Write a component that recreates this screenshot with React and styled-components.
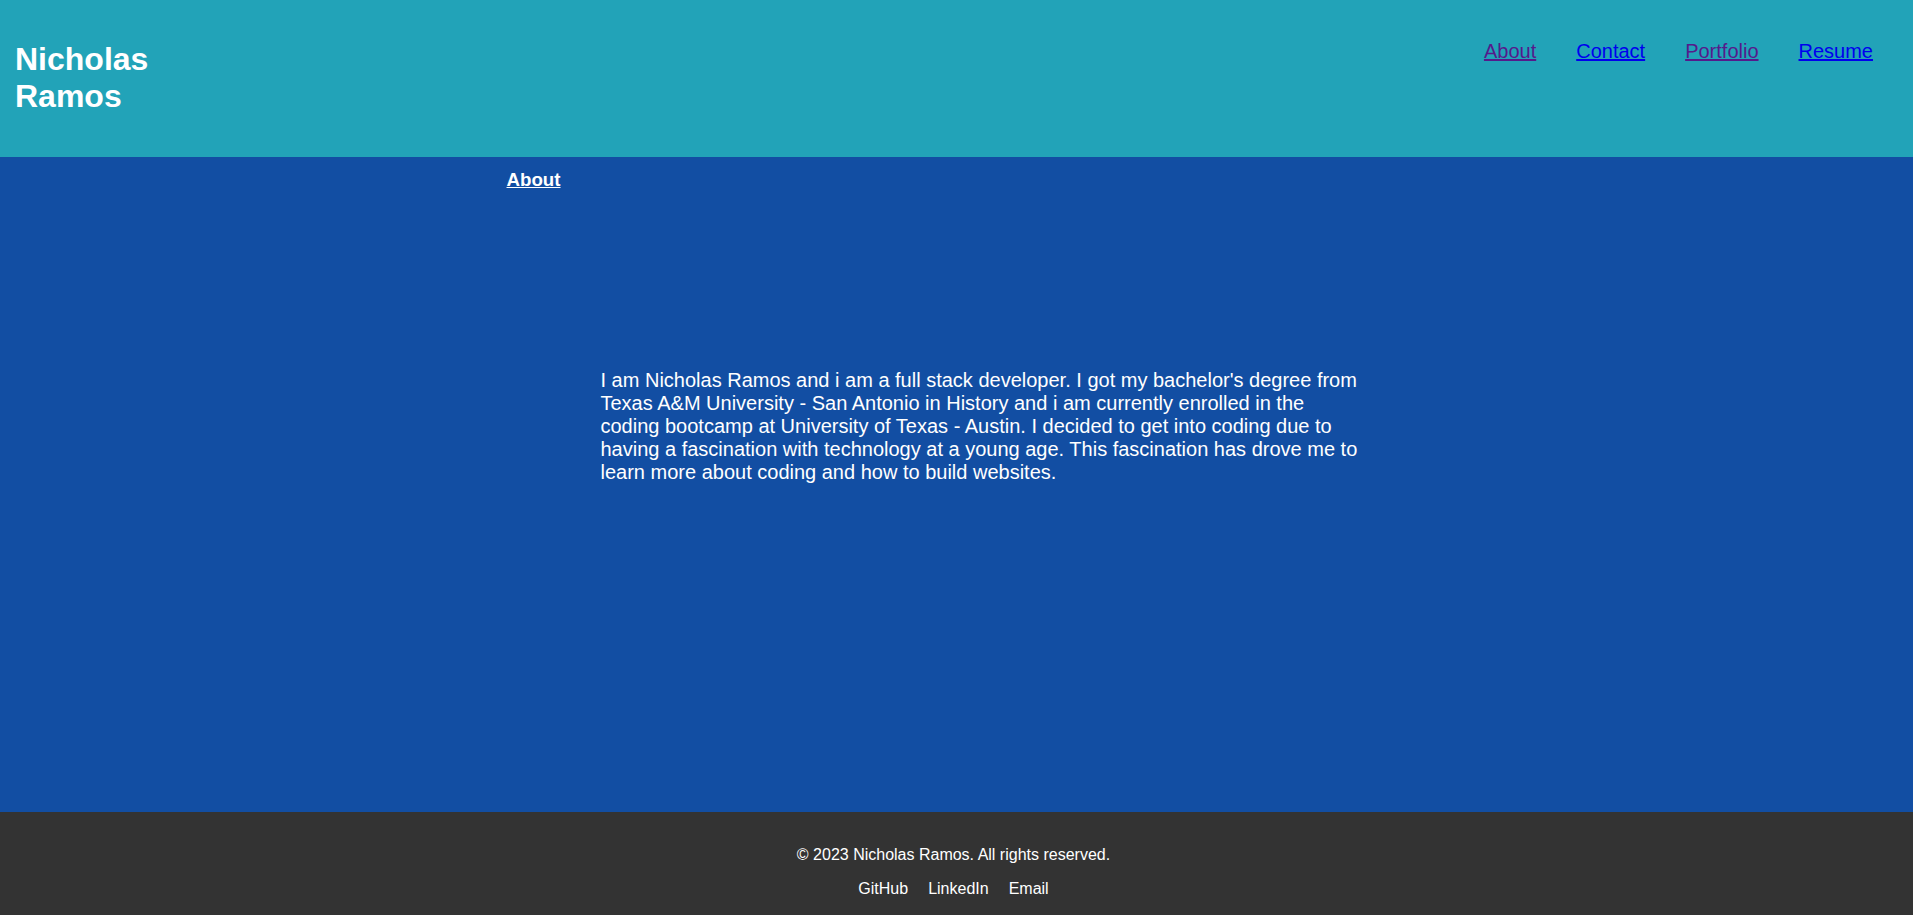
import React from "react";
import styled, { createGlobalStyle } from "styled-components";

const GlobalStyle = createGlobalStyle`
  body {
    margin: 0;
    font-family: "Liberation Sans", Arial, sans-serif;
  }
`;

const navLinks = [
  { label: "About", visited: true },
  { label: "Contact", visited: false },
  { label: "Portfolio", visited: true },
  { label: "Resume", visited: false },
];

const footerLinks = ["GitHub", "LinkedIn", "Email"];

const App = () => {
  return (
    <>
      <GlobalStyle />
      <Page>
        <Header>
          <Title>Nicholas Ramos</Title>
          <Nav>
            {navLinks.map((link) => (
              <NavLink key={link.label} href="#" visited={link.visited ? 1 : 0}>
                {link.label}
              </NavLink>
            ))}
          </Nav>
        </Header>
        <Main>
          <Content>
            <SectionTitle>
              <SectionLink href="#">About</SectionLink>
            </SectionTitle>
            <Bio>
              I am Nicholas Ramos and i am a full stack developer. I got my
              bachelor's degree from Texas A&amp;M University - San Antonio in
              History and i am currently enrolled in the coding bootcamp at
              University of Texas - Austin. I decided to get into coding due to
              having a fascination with technology at a young age. This
              fascination has drove me to learn more about coding and how to
              build websites.
            </Bio>
          </Content>
        </Main>
        <Footer>
          <Copyright>© 2023 Nicholas Ramos. All rights reserved.</Copyright>
          <FooterLinks>
            {footerLinks.map((label) => (
              <FooterLink key={label} href="#">
                {label}
              </FooterLink>
            ))}
          </FooterLinks>
        </Footer>
      </Page>
    </>
  );
};

export default App;

const Page = styled.div`
  display: flex;
  flex-direction: column;
  min-height: 100vh;
`;

const Header = styled.header`
  display: flex;
  justify-content: space-between;
  align-items: flex-start;
  padding: 20px 20px 20px 15px;
  background-color: #22a3b8;
`;

const Title = styled.h1`
  width: 130px;
  margin: 21.44px 0;
  color: white;
  font-size: 32px;
  font-weight: bold;
`;

const Nav = styled.nav`
  display: flex;
  margin-top: 20px;
`;

const NavLink = styled.a`
  margin: 0 20px;
  font-size: 20px;
  color: ${(props) => (props.visited ? "#551a8b" : "#0000ee")};
  text-decoration: underline;
`;

const Main = styled.main`
  flex: 1;
  background-color: #124ea3;
`;

const Content = styled.div`
  width: 900px;
  margin: 0 auto;
  padding-top: 12px;
`;

const SectionTitle = styled.h3`
  margin: 0;
  font-size: 18.72px;
  font-weight: bold;
`;

const SectionLink = styled.a`
  color: white;
  text-decoration: underline;
`;

const Bio = styled.p`
  width: 762px;
  margin: 178px 0 0 94px;
  color: white;
  font-size: 20px;
`;

const Footer = styled.footer`
  padding: 18px 6px 17px 0;
  background-color: #333333;
  color: white;
  text-align: center;
  font-size: 16px;
`;

const Copyright = styled.p`
  margin: 16px 0;
`;

const FooterLinks = styled.div`
  display: flex;
  justify-content: center;
`;

const FooterLink = styled.a`
  margin: 0 10px;
  color: white;
  text-decoration: none;
`;
